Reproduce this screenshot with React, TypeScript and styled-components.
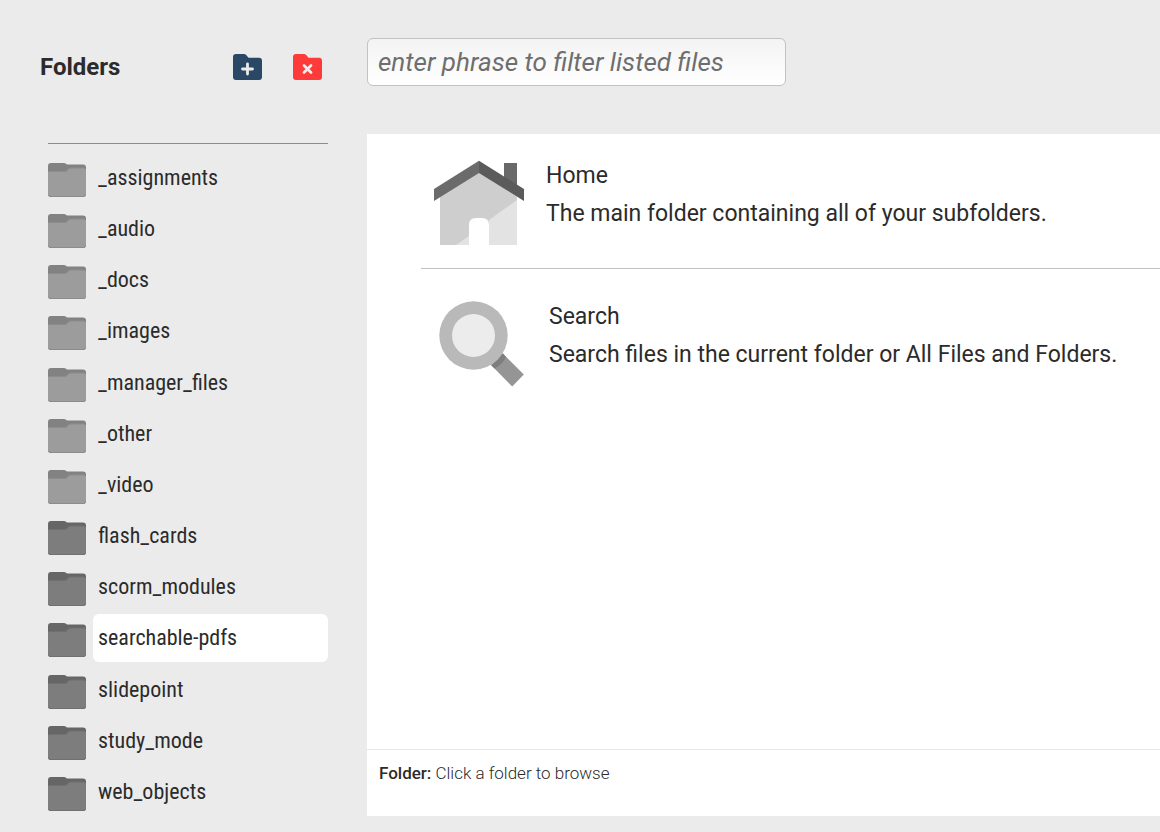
import React, { useState } from "react";
import styled, { createGlobalStyle } from "styled-components";

const GlobalStyle = createGlobalStyle`
  *, *::before, *::after { box-sizing: border-box; }
  body {
    margin: 0;
    background: #ebebeb;
    color: #2b2b2b;
    font-family: Roboto, "Liberation Sans", sans-serif;
  }
  button, input { font: inherit; color: inherit; }
`;

const Page = styled.div`
  display: flex;
  gap: 39px;
  min-height: 100vh;
  padding: 38px 0 16px 40px;
`;

const Sidebar = styled.aside`
  flex: 0 0 288px;
  display: flex;
  flex-direction: column;
`;

const SidebarHeader = styled.header`
  display: flex;
  align-items: center;
  height: 58px;
  padding-right: 6px;
`;

const SidebarTitle = styled.h1`
  flex: 1;
  margin: 0;
  font-size: 24px;
  line-height: 32px;
  font-weight: 700;
`;

const IconButton = styled.button`
  display: block;
  margin-left: 31px;
  padding: 0;
  border: 0;
  background: none;
  cursor: pointer;

  svg { display: block; }
`;

const FolderNav = styled.nav`
  flex: 1;
  display: flex;
  flex-direction: column;
  margin: 47px 0 0 8px;
  border-top: 1px solid #8c8c8c;
  padding-top: 10px;
`;

const FolderList = styled.ul`
  flex: 1;
  display: flex;
  flex-direction: column;
  justify-content: space-between;
  margin: 0;
  padding: 0;
  list-style: none;
`;

const FolderRow = styled.button`
  display: flex;
  align-items: center;
  gap: 7px;
  width: 100%;
  height: 48px;
  padding: 0;
  border: 0;
  background: none;
  text-align: left;
  cursor: pointer;

  svg { flex: none; margin-top: 4px; }
`;

const FolderName = styled.span<{ $selected: boolean }>`
  flex: 1;
  padding: 0 5px;
  border-radius: 6px;
  background: ${(p) => (p.$selected ? "#ffffff" : "transparent")};
  font-family: "Roboto Condensed", Roboto, sans-serif;
  font-size: 22px;
  line-height: 48px;
`;

const Main = styled.main`
  flex: 1;
  min-width: 0;
  display: flex;
  flex-direction: column;
  gap: 48px;
`;

const FilterInput = styled.input`
  width: 419px;
  max-width: 100%;
  height: 48px;
  padding: 0 10px;
  border: 1px solid #c2c2c2;
  border-radius: 6px;
  background: linear-gradient(#f3f3f3, #ffffff);
  font-size: 26px;

  &::placeholder {
    color: #6e6e6e;
    font-style: italic;
    opacity: 1;
  }
`;

const Panel = styled.section`
  flex: 1;
  display: flex;
  flex-direction: column;
  background: #ffffff;
`;

const Entries = styled.div`
  flex: 1;
  padding-left: 54px;
`;

const Entry = styled.article<{ $gap: number }>`
  display: flex;
  align-items: flex-start;
  gap: ${(p) => p.$gap}px;
  padding: 23px 0 22px 12px;

  & + & {
    border-top: 1px solid #c0c0c0;
    padding-top: 29px;
  }

  svg { flex: none; margin-top: 3px; }
`;

const EntryTitle = styled.h2`
  margin: 0;
  font-size: 23px;
  line-height: 38px;
  font-weight: 400;
`;

const EntryText = styled.p`
  margin: 0;
  font-size: 23px;
  line-height: 38px;
`;

const Status = styled.footer`
  min-height: 67px;
  padding: 12px;
  border-top: 1px solid #e8e8e8;
  font-size: 17px;
  line-height: 23px;
  font-weight: 300;

  strong { font-weight: 500; }
`;

const folders = [
  "_assignments",
  "_audio",
  "_docs",
  "_images",
  "_manager_files",
  "_other",
  "_video",
  "flash_cards",
  "scorm_modules",
  "searchable-pdfs",
  "slidepoint",
  "study_mode",
  "web_objects",
];

function FolderIcon({ system }: { system: boolean }) {
  const [front, back, edge] = system
    ? ["#9c9c9c", "#828282", "#8c8c8c"]
    : ["#7d7d7d", "#666666", "#707070"];
  return (
    <svg width="38" height="34" viewBox="0 0 38 34" aria-hidden="true">
      <path d="M0 3Q0 0 3 0H16Q18 0 19 1.5H35Q38 1.5 38 4.5V31Q38 34 35 34H3Q0 34 0 31Z" fill={back} />
      <path d="M0 8H16Q18.500 8 19.500 6Q20.500 4.500 22.500 4.500H36Q38 4.500 38 6.500V31Q38 34 35 34H3Q0 34 0 31Z" fill={edge} />
      <path d="M0 9H17Q19 9 20 7Q21 5.500 23 5.500H36Q38 5.500 38 7.500V30.500Q38 33 35 33H3Q0 33 0 30.500Z" fill={front} />
    </svg>
  );
}

function ActionIcon({ color, mark }: { color: string; mark: string }) {
  return (
    <svg width="29" height="26" viewBox="0 0 29 26" aria-hidden="true">
      <path d="M0 3Q0 0 3 0H11Q12.300 0 13.200 1L15.500 3.700H26Q29 3.700 29 6.700V23Q29 26 26 26H3Q0 26 0 23Z" fill={color} />
      <path d={mark} fill="none" stroke="#ebebeb" strokeWidth="2.800" strokeLinecap="round" />
    </svg>
  );
}

function HomeIcon() {
  return (
    <svg width="91" height="86" viewBox="0 0 91 86" aria-hidden="true">
      <path d="M7 37L46 11L84 37V85H56V65Q56 58 49 58H43Q36 58 36 65V85H7Z" fill="#cecece" />
      <path d="M84 40V85H56V60ZM36 76V85H23Z" fill="#e3e3e3" />
      <path d="M71 3H84V27L71 19Z" fill="#696969" />
      <path d="M46 0.700L1 29V41L46 13Z" fill="#6b6b6b" />
      <path d="M46 0.700L91 29V41L46 13Z" fill="#5b5b5b" />
    </svg>
  );
}

function SearchIcon() {
  return (
    <svg width="91" height="86" viewBox="0 0 91 86" aria-hidden="true">
      <path d="M58 64L69.700 52.300L90.800 73.600L79.200 85.400Z" fill="#959595" />
      <path d="M58 64L69.700 52.300L73 56Q69 64 61.500 67.500Z" fill="#7e7e7e" />
      <circle cx="40.500" cy="34.500" r="34.200" fill="#b9b9b9" />
      <circle cx="40.500" cy="34.500" r="21.500" fill="#ececec" />
    </svg>
  );
}

export default function App() {
  const [selected, setSelected] = useState("searchable-pdfs");

  return (
    <>
      <GlobalStyle />
      <Page>
        <Sidebar>
          <SidebarHeader>
            <SidebarTitle>Folders</SidebarTitle>
            <IconButton type="button" aria-label="New folder">
              <ActionIcon color="#2a4766" mark="M14.500 10V20M9.500 15H19.500" />
            </IconButton>
            <IconButton type="button" aria-label="Delete folder">
              <ActionIcon color="#fe3a3a" mark="M11 11.500L18 18.500M18 11.500L11 18.500" />
            </IconButton>
          </SidebarHeader>
          <FolderNav aria-label="Folders">
            <FolderList>
              {folders.map((name) => (
                <li key={name}>
                  <FolderRow
                    type="button"
                    aria-pressed={name === selected}
                    onClick={() => setSelected(name)}
                  >
                    <FolderIcon system={name.startsWith("_")} />
                    <FolderName $selected={name === selected}>{name}</FolderName>
                  </FolderRow>
                </li>
              ))}
            </FolderList>
          </FolderNav>
        </Sidebar>
        <Main>
          <FilterInput
            type="text"
            aria-label="Filter listed files"
            placeholder="enter phrase to filter listed files"
          />
          <Panel>
            <Entries>
              <Entry $gap={22}>
                <HomeIcon />
                <div>
                  <EntryTitle>Home</EntryTitle>
                  <EntryText>The main folder containing all of your subfolders.</EntryText>
                </div>
              </Entry>
              <Entry $gap={25}>
                <SearchIcon />
                <div>
                  <EntryTitle>Search</EntryTitle>
                  <EntryText>Search files in the current folder or All Files and Folders.</EntryText>
                </div>
              </Entry>
            </Entries>
            <Status>
              <strong>Folder:</strong> Click a folder to browse
            </Status>
          </Panel>
        </Main>
      </Page>
    </>
  );
}
